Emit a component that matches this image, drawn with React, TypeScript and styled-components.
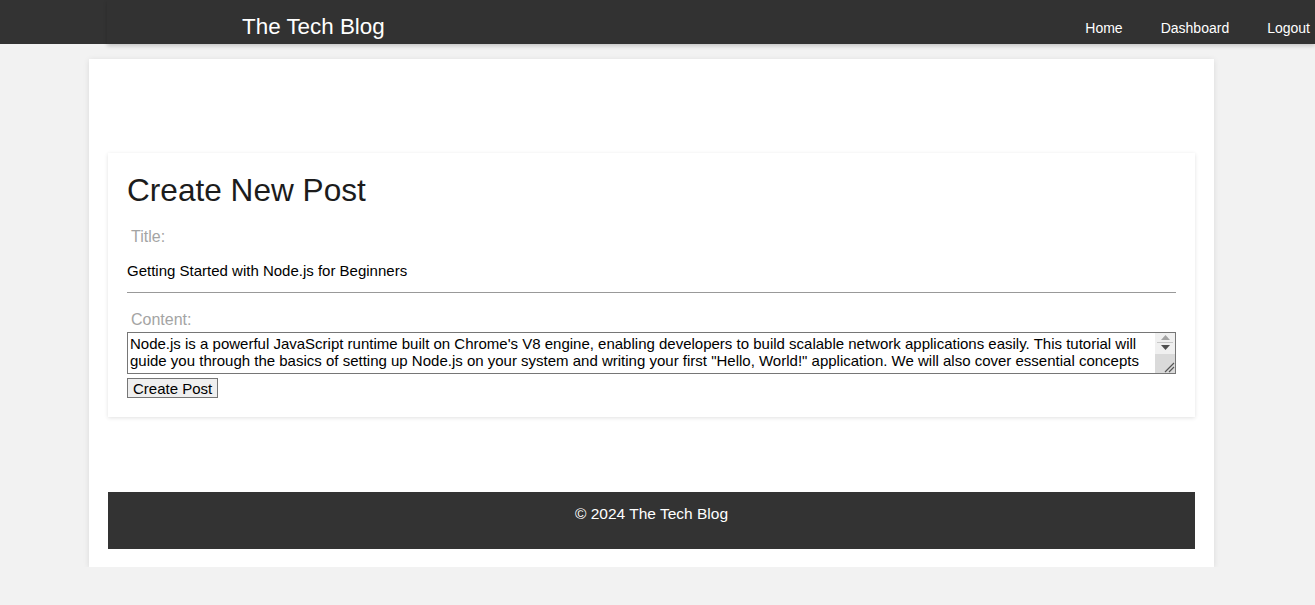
import React from "react";
import styled, { createGlobalStyle } from "styled-components";

const GlobalStyle = createGlobalStyle`
  html, body {
    margin: 0;
    padding: 0;
    background: #f2f2f2;
    font-family: "Liberation Sans", Arial, sans-serif;
  }
  * { box-sizing: border-box; }
`;

const Header = styled.header`
  display: flex;
  height: 44px;
  background: #333333;
`;

const HeaderInner = styled.div`
  flex: 1;
  margin-left: 107px;
  display: flex;
  align-items: flex-start;
  justify-content: space-between;
  box-shadow: 0 2px 4px rgba(0, 0, 0, 0.18);
  background: #323232;
`;

const Brand = styled.h1`
  margin: 14px 0 0 135px;
  font-size: 22.4px;
  font-weight: normal;
  color: #ffffff;
`;

const Nav = styled.nav`
  display: flex;
  gap: 38px;
  margin-top: 20px;
  padding-right: 5px;
`;

const NavLink = styled.a`
  color: #ffffff;
  font-size: 14px;
  text-decoration: none;
`;

const Container = styled.main`
  width: 1125px;
  margin: 15px 0 0 89px;
  background: #ffffff;
  padding: 94px 19px 18px;
  box-shadow: 0 1px 6px rgba(0, 0, 0, 0.1);
`;

const Card = styled.section`
  padding: 19px;
  background: #ffffff;
  box-shadow: 0 1px 4px rgba(0, 0, 0, 0.12);
`;

const Heading = styled.h2`
  margin: 0;
  font-size: 31.6px;
  font-weight: normal;
  color: #1c1c1c;
`;

const Label = styled.label<{ $top: number }>`
  display: block;
  margin-top: ${(p) => p.$top}px;
  padding-left: 4px;
  font-size: 16px;
  color: #a4a4a4;
`;

const TitleInput = styled.input`
  display: block;
  width: 100%;
  margin-top: 7px;
  padding: 9px 0 13px;
  border: none;
  border-bottom: 1px solid #999999;
  outline: none;
  font-family: "Liberation Sans", Arial, sans-serif;
  font-size: 15px;
  line-height: 17px;
  color: #000000;
  background: transparent;
`;

const AreaWrap = styled.div`
  position: relative;
  margin-top: 3px;
  height: 42px;
  padding-bottom: 3px;
  border: 1px solid #767676;
  background: #ffffff;
`;

const ContentArea = styled.textarea`
  display: block;
  width: 100%;
  height: 37px;
  padding: 2px 23px 0 2px;
  border: none;
  outline: none;
  font-family: "Liberation Sans", Arial, sans-serif;
  font-size: 15px;
  line-height: 17px;
  color: #000000;
  resize: none;
  overflow: hidden;
`;

const Scrollbar = styled.div`
  position: absolute;
  top: 0;
  right: 0;
  bottom: 0;
  width: 20px;
  display: flex;
  flex-direction: column;
  background: #f0f0f0;
`;

const ScrollButton = styled.div`
  height: 9px;
  display: flex;
  align-items: center;
  justify-content: center;
`;

const ScrollDivider = styled.div`
  height: 1px;
  margin: 0 2px;
  background: #c8c8c8;
`;

const Thumb = styled.div`
  flex: 1;
  margin-top: 2px;
  background: #dadada;
  display: flex;
  align-items: flex-end;
  justify-content: flex-end;
`;

const SubmitButton = styled.button`
  display: block;
  margin-top: 4px;
  height: 20px;
  padding: 0 5px;
  border: 1px solid #767676;
  border-radius: 0;
  background: #efefef;
  font-family: "Liberation Sans", Arial, sans-serif;
  font-size: 15px;
  color: #000000;
`;

const Footer = styled.footer`
  margin-top: 75px;
  height: 57px;
  padding-top: 13px;
  background: #333333;
  color: #ffffff;
  text-align: center;
  font-size: 15.5px;
`;

const content =
  'Node.js is a powerful JavaScript runtime built on Chrome\'s V8 engine, enabling developers to build scalable network applications easily. This tutorial will guide you through the basics of setting up Node.js on your system and writing your first "Hello, World!" application. We will also cover essential concepts such as modules, npm, and asynchronous programming.';

export default function App() {
  return (
    <>
      <GlobalStyle />
      <Header>
        <HeaderInner>
          <Brand>The Tech Blog</Brand>
          <Nav>
            <NavLink href="#">Home</NavLink>
            <NavLink href="#">Dashboard</NavLink>
            <NavLink href="#">Logout</NavLink>
          </Nav>
        </HeaderInner>
      </Header>
      <Container>
        <Card>
          <Heading>Create New Post</Heading>
          <Label $top={19}>Title:</Label>
          <TitleInput defaultValue="Getting Started with Node.js for Beginners" />
          <Label $top={18}>Content:</Label>
          <AreaWrap>
            <ContentArea defaultValue={content} />
            <Scrollbar aria-hidden="true">
              <ScrollButton>
                <svg width="9" height="5" viewBox="0 0 9 5">
                  <path d="M0 5 L4.5 0 L9 5 Z" fill="#a3a3a3" />
                </svg>
              </ScrollButton>
              <ScrollDivider />
              <ScrollButton>
                <svg width="9" height="5" viewBox="0 0 9 5">
                  <path d="M0 0 L9 0 L4.5 5 Z" fill="#505050" />
                </svg>
              </ScrollButton>
              <Thumb>
                <svg width="12" height="12" viewBox="0 0 12 12">
                  <path d="M11 2 L2 11 M11 6 L6 11" stroke="#555" strokeWidth="1.2" />
                </svg>
              </Thumb>
            </Scrollbar>
          </AreaWrap>
          <SubmitButton>Create Post</SubmitButton>
        </Card>
        <Footer>© 2024 The Tech Blog</Footer>
      </Container>
    </>
  );
}
